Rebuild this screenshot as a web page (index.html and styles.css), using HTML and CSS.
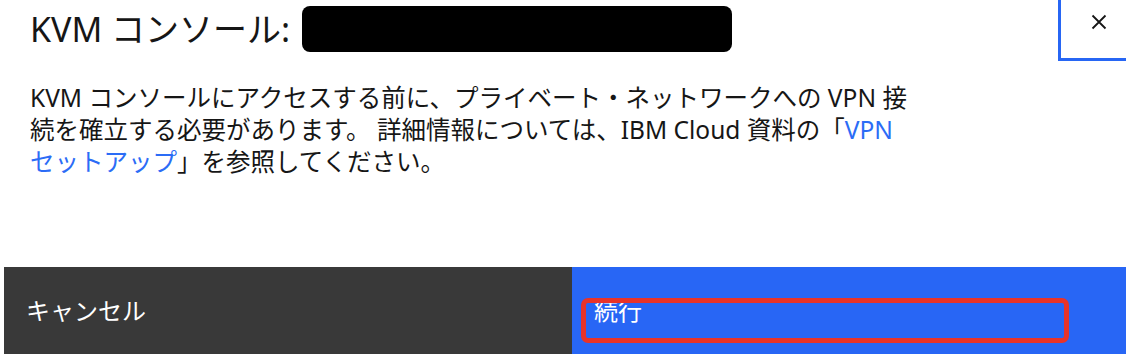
FILE: index.html
```html
<!DOCTYPE html>
<html lang="ja">
  <head>
    <meta charset="UTF-8" />
    <title>KVM コンソール</title>
    <link rel="stylesheet" href="styles.css">
  </head>
  <body>
    <div class="modal">
      <div class="modal-header">
        <h2 class="modal-title">KVM コンソール:</h2>
        <span class="redacted"></span>
      </div>
      <button class="close-button" aria-label="閉じる">
        <svg width="16" height="16" viewBox="0 0 16 16">
          <path d="M1.5 1.5 L14.5 14.5 M14.5 1.5 L1.5 14.5" stroke="#161616" stroke-width="1.8" fill="none" />
        </svg>
      </button>
      <p class="modal-text">
        KVM コンソールにアクセスする前に、プライベート・ネットワークへの VPN 接続を確立する必要があります。 詳細情報については、IBM Cloud 資料の「<a href="#">VPN セットアップ</a>」を参照してください。
      </p>
      <div class="modal-footer">
        <button class="footer-button secondary">キャンセル</button>
        <button class="footer-button primary">
          続行
          <span class="highlight"></span>
        </button>
      </div>
    </div>
  </body>
</html>
```

FILE: styles.css
```css
body {
  margin: 0;
  background-color: white;
  color: #161616;
  font-family: "Noto Sans", "Noto Sans CJK JP", sans-serif;
  overflow: hidden;
}

.modal {
  position: relative;
  margin-left: 4px;
  width: 1136px;
  height: 354px;
}

.modal-header {
  display: flex;
  align-items: center;
  padding-top: 6px;
  padding-left: 26px;
}

.modal-title {
  margin: 0;
  font-size: 34px;
  font-weight: 400;
  line-height: 46px;
}

.redacted {
  display: inline-block;
  width: 430px;
  height: 46px;
  margin-left: 12px;
  background-color: black;
  border-radius: 8px;
}

.close-button {
  position: absolute;
  top: -21px;
  right: 0;
  width: 82px;
  height: 82px;
  padding: 4px 0 0 0;
  background-color: white;
  border: 3px solid #2766f4;
  display: flex;
  align-items: center;
  justify-content: center;
}

.modal-text {
  margin: 30px 0 0 0;
  padding-left: 26px;
  width: 886px;
  font-size: 24.5px;
  line-height: 32px;
}

.modal-text a {
  color: #2b6cf6;
  text-decoration: none;
}

.modal-footer {
  display: flex;
  margin-top: 89px;
}

.footer-button {
  position: relative;
  flex: 1;
  border: none;
  padding: 27px 22px 37px 22px;
  text-align: left;
  font-family: "Noto Sans CJK JP", sans-serif;
  font-size: 24px;
  line-height: 32px;
  color: white;
}

.secondary {
  background-color: #393939;
}

.primary {
  background-color: #2866f5;
}

.highlight {
  position: absolute;
  left: 9px;
  top: 31px;
  width: 478px;
  height: 35px;
  border: 5px solid #e8332a;
  border-radius: 7px;
}
```
